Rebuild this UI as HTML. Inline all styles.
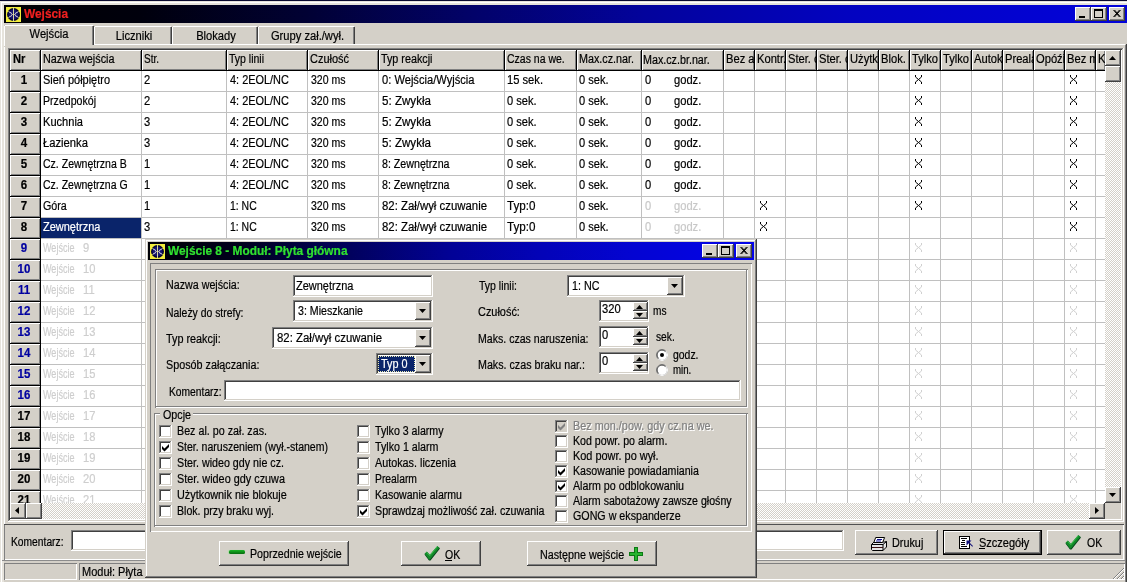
<!DOCTYPE html>
<html><head><meta charset="utf-8"><title>Wejścia</title><style>
html,body{margin:0;padding:0;background:#d4d0c8}
#r{will-change:transform;position:relative;width:1127px;height:582px;overflow:hidden;font-family:"Liberation Sans",sans-serif;font-size:11px;color:#000}
.a{position:absolute;display:block}
.t{white-space:pre;line-height:13px;font-size:12px;transform-origin:0 0;-webkit-text-stroke:0.2px currentColor}
</style></head><body><div id="r">
<div class="a" style="left:0px;top:0px;width:1127px;height:582px;background:#d4d0c8"></div>
<div class="a" style="left:0px;top:0px;width:1127px;height:1px;background:#0a0a30"></div>
<div class="a" style="left:0px;top:1px;width:1127px;height:4px;background:#e6e3dc"></div>
<div class="a" style="left:0px;top:1px;width:4px;height:581px;background:#e6e3dc"></div>
<div class="a" style="left:1px;top:2px;width:1126px;height:1px;background:#ffffff"></div>
<div class="a" style="left:1px;top:2px;width:1px;height:580px;background:#ffffff"></div>
<div class="a" style="left:1125px;top:45px;width:1px;height:537px;background:#808080"></div>
<div class="a" style="left:1126px;top:44px;width:1px;height:538px;background:#404040"></div>
<div class="a" style="left:4px;top:25px;width:1px;height:499px;background:#ffffff"></div>
<div class="a" style="left:4px;top:5px;width:1123px;height:18px;background:linear-gradient(to right,#000004 0%,#00000c 12%,#010134 27%,#02026a 42%,#03039c 57%,#0303c0 75%,#0303da 100%)"></div>
<div class="a" style="left:6px;top:7px;width:15px;height:15px"><svg width="15" height="15" viewBox="0 0 15 15"><rect width="15" height="15" fill="#f2ee3c"/><circle cx="7.500" cy="7.500" r="6.500" fill="#050530"/><circle cx="7.500" cy="7.500" r="5" fill="#15156e"/><path d="M6 6.600L2.600 4.600M9 6.600L12.400 4.600M6 8.400L2.600 10.400M9 8.400L12.400 10.400" stroke="#f4f4f4" stroke-width="0.900"/><path d="M7.500 0.500V14.500" stroke="#eeeea0" stroke-width="0.900"/><path d="M5.500 7.500H9.500" stroke="#d8d8b0" stroke-width="0.800"/><path d="M0.600 3.800L2.200 4.700M14.400 3.800L12.800 4.700M0.600 11.200L2.200 10.300M14.400 11.200L12.800 10.300" stroke="#f2ee3c" stroke-width="1.200"/></svg></div>
<div class="a t" style="left:24px;top:6px;transform:scaleX(0.9891);color:#f02020;font-weight:bold;line-height:16px">Wejścia</div>
<div class="a" style="left:1075px;top:7px;width:16px;height:14px;background:#d4d0c8;box-shadow:inset -1px -1px 0 #404040,inset 1px 1px 0 #ffffff,inset -2px -2px 0 #808080"></div>
<div class="a" style="left:1079px;top:16px;width:6px;height:2px;background:#000"></div>
<div class="a" style="left:1091px;top:7px;width:16px;height:14px;background:#d4d0c8;box-shadow:inset -1px -1px 0 #404040,inset 1px 1px 0 #ffffff,inset -2px -2px 0 #808080"></div>
<div class="a" style="left:1094px;top:9px;width:9px;height:9px;border:1px solid #000;border-top:2px solid #000;box-sizing:border-box"></div>
<div class="a" style="left:1109px;top:7px;width:16px;height:14px;background:#d4d0c8;box-shadow:inset -1px -1px 0 #404040,inset 1px 1px 0 #ffffff,inset -2px -2px 0 #808080"></div>
<svg class="a" style="left:1113px;top:10px" width="8" height="7" viewBox="0 0 8 7"><path d="M0.5 0L6.5 7M1.5 0L7.5 7M6.5 0L0.5 7M7.5 0L1.5 7" stroke="#000" stroke-width="1" fill="none"/></svg>
<div class="a" style="left:4px;top:44px;width:1121px;height:1px;background:#ffffff"></div>
<div class="a" style="left:95px;top:26px;width:76px;height:1px;background:#ffffff"></div>
<div class="a" style="left:94px;top:27px;width:1px;height:17px;background:#ffffff"></div>
<div class="a" style="left:171px;top:27px;width:1px;height:17px;background:#404040"></div>
<div class="a" style="left:170px;top:27px;width:1px;height:17px;background:#808080"></div>
<div class="a t" style="left:95px;top:30px;transform:scaleX(0.93);transform-origin:50% 0;width:78px;text-align:center">Liczniki</div>
<div class="a" style="left:173px;top:26px;width:84px;height:1px;background:#ffffff"></div>
<div class="a" style="left:172px;top:27px;width:1px;height:17px;background:#ffffff"></div>
<div class="a" style="left:257px;top:27px;width:1px;height:17px;background:#404040"></div>
<div class="a" style="left:256px;top:27px;width:1px;height:17px;background:#808080"></div>
<div class="a t" style="left:173px;top:30px;transform:scaleX(0.93);transform-origin:50% 0;width:86px;text-align:center">Blokady</div>
<div class="a" style="left:259px;top:26px;width:95px;height:1px;background:#ffffff"></div>
<div class="a" style="left:258px;top:27px;width:1px;height:17px;background:#ffffff"></div>
<div class="a" style="left:354px;top:27px;width:1px;height:17px;background:#404040"></div>
<div class="a" style="left:353px;top:27px;width:1px;height:17px;background:#808080"></div>
<div class="a t" style="left:259px;top:30px;transform:scaleX(0.93);transform-origin:50% 0;width:97px;text-align:center">Grupy zał./wył.</div>
<div class="a" style="left:4px;top:25px;width:90px;height:22px;background:#d4d0c8"></div>
<div class="a" style="left:5px;top:25px;width:88px;height:1px;background:#ffffff"></div>
<div class="a" style="left:4px;top:26px;width:1px;height:20px;background:#ffffff"></div>
<div class="a" style="left:93px;top:26px;width:1px;height:19px;background:#404040"></div>
<div class="a" style="left:92px;top:26px;width:1px;height:19px;background:#808080"></div>
<div class="a t" style="left:4px;top:28px;transform:scaleX(0.93);transform-origin:50% 0;width:90px;text-align:center">Wejścia</div>
<div class="a" style="left:8px;top:48px;width:1116px;height:474px;background:#ffffff;box-shadow:inset -1px -1px 0 #ffffff,inset 1px 1px 0 #808080,inset -2px -2px 0 #d4d0c8,inset 2px 2px 0 #404040"></div>
<div class="a" style="left:10px;top:50px;width:30px;height:20px;background:#d4d0c8;box-shadow:inset 1px 1px 0 #ffffff,inset -1px -1px 0 #808080;overflow:hidden"><span class="a t" style="left:2px;top:3px;transform:scaleX(0.93);font-weight:bold;left:3px">Nr</span></div>
<div class="a" style="left:41px;top:50px;width:100px;height:20px;background:#d4d0c8;box-shadow:inset 1px 1px 0 #ffffff,inset -1px -1px 0 #808080;overflow:hidden"><span class="a t" style="left:2px;top:3px;transform:scaleX(0.9010);">Nazwa wejścia</span></div>
<div class="a" style="left:142px;top:50px;width:84px;height:20px;background:#d4d0c8;box-shadow:inset 1px 1px 0 #ffffff,inset -1px -1px 0 #808080;overflow:hidden"><span class="a t" style="left:2px;top:3px;transform:scaleX(0.8326);">Str.</span></div>
<div class="a" style="left:227px;top:50px;width:80px;height:20px;background:#d4d0c8;box-shadow:inset 1px 1px 0 #ffffff,inset -1px -1px 0 #808080;overflow:hidden"><span class="a t" style="left:2px;top:3px;transform:scaleX(0.8747);">Typ linii</span></div>
<div class="a" style="left:308px;top:50px;width:70px;height:20px;background:#d4d0c8;box-shadow:inset 1px 1px 0 #ffffff,inset -1px -1px 0 #808080;overflow:hidden"><span class="a t" style="left:2px;top:3px;transform:scaleX(0.9136);">Czułość</span></div>
<div class="a" style="left:379px;top:50px;width:125px;height:20px;background:#d4d0c8;box-shadow:inset 1px 1px 0 #ffffff,inset -1px -1px 0 #808080;overflow:hidden"><span class="a t" style="left:2px;top:3px;transform:scaleX(0.8978);">Typ reakcji</span></div>
<div class="a" style="left:505px;top:50px;width:71px;height:20px;background:#d4d0c8;box-shadow:inset 1px 1px 0 #ffffff,inset -1px -1px 0 #808080;overflow:hidden"><span class="a t" style="left:2px;top:3px;transform:scaleX(0.8738);">Czas na we.</span></div>
<div class="a" style="left:577px;top:50px;width:64px;height:20px;background:#d4d0c8;box-shadow:inset 1px 1px 0 #ffffff,inset -1px -1px 0 #808080;overflow:hidden"><span class="a t" style="left:2px;top:3px;transform:scaleX(0.8964);">Max.cz.nar.</span></div>
<div class="a" style="left:642px;top:50px;width:81px;height:20px;background:#d4d0c8;box-shadow:inset 1px 1px 0 #ffffff,inset -1px -1px 0 #808080;overflow:hidden"><span class="a t" style="left:2px;top:3px;transform:scaleX(0.8942);left:1px;top:4px">Max.cz.br.nar.</span></div>
<div class="a" style="left:724px;top:50px;width:30px;height:20px;background:#d4d0c8;box-shadow:inset 1px 1px 0 #ffffff,inset -1px -1px 0 #808080;overflow:hidden"><span class="a t" style="left:2px;top:3px;transform:scaleX(0.93);">Bez a</span></div>
<div class="a" style="left:755px;top:50px;width:30px;height:20px;background:#d4d0c8;box-shadow:inset 1px 1px 0 #ffffff,inset -1px -1px 0 #808080;overflow:hidden"><span class="a t" style="left:2px;top:3px;transform:scaleX(0.93);">Kontr.</span></div>
<div class="a" style="left:786px;top:50px;width:30px;height:20px;background:#d4d0c8;box-shadow:inset 1px 1px 0 #ffffff,inset -1px -1px 0 #808080;overflow:hidden"><span class="a t" style="left:2px;top:3px;transform:scaleX(0.93);">Ster. o</span></div>
<div class="a" style="left:817px;top:50px;width:30px;height:20px;background:#d4d0c8;box-shadow:inset 1px 1px 0 #ffffff,inset -1px -1px 0 #808080;overflow:hidden"><span class="a t" style="left:2px;top:3px;transform:scaleX(0.93);">Ster. o</span></div>
<div class="a" style="left:848px;top:50px;width:30px;height:20px;background:#d4d0c8;box-shadow:inset 1px 1px 0 #ffffff,inset -1px -1px 0 #808080;overflow:hidden"><span class="a t" style="left:2px;top:3px;transform:scaleX(0.93);">Użytk</span></div>
<div class="a" style="left:879px;top:50px;width:30px;height:20px;background:#d4d0c8;box-shadow:inset 1px 1px 0 #ffffff,inset -1px -1px 0 #808080;overflow:hidden"><span class="a t" style="left:2px;top:3px;transform:scaleX(0.93);">Blok.</span></div>
<div class="a" style="left:910px;top:50px;width:30px;height:20px;background:#d4d0c8;box-shadow:inset 1px 1px 0 #ffffff,inset -1px -1px 0 #808080;overflow:hidden"><span class="a t" style="left:2px;top:3px;transform:scaleX(0.93);">Tylko</span></div>
<div class="a" style="left:941px;top:50px;width:30px;height:20px;background:#d4d0c8;box-shadow:inset 1px 1px 0 #ffffff,inset -1px -1px 0 #808080;overflow:hidden"><span class="a t" style="left:2px;top:3px;transform:scaleX(0.93);">Tylko</span></div>
<div class="a" style="left:972px;top:50px;width:30px;height:20px;background:#d4d0c8;box-shadow:inset 1px 1px 0 #ffffff,inset -1px -1px 0 #808080;overflow:hidden"><span class="a t" style="left:2px;top:3px;transform:scaleX(0.93);">Autok</span></div>
<div class="a" style="left:1003px;top:50px;width:30px;height:20px;background:#d4d0c8;box-shadow:inset 1px 1px 0 #ffffff,inset -1px -1px 0 #808080;overflow:hidden"><span class="a t" style="left:2px;top:3px;transform:scaleX(0.93);">Preala</span></div>
<div class="a" style="left:1034px;top:50px;width:30px;height:20px;background:#d4d0c8;box-shadow:inset 1px 1px 0 #ffffff,inset -1px -1px 0 #808080;overflow:hidden"><span class="a t" style="left:2px;top:3px;transform:scaleX(0.93);">Opóźi</span></div>
<div class="a" style="left:1065px;top:50px;width:30px;height:20px;background:#d4d0c8;box-shadow:inset 1px 1px 0 #ffffff,inset -1px -1px 0 #808080;overflow:hidden"><span class="a t" style="left:2px;top:3px;transform:scaleX(0.93);">Bez m</span></div>
<div class="a" style="left:1096px;top:50px;width:9px;height:20px;background:#d4d0c8;box-shadow:inset 1px 1px 0 #ffffff,inset -1px -1px 0 #808080;overflow:hidden"><span class="a t" style="left:2px;top:3px;transform:scaleX(0.93);">K</span></div>
<div class="a" style="left:40px;top:50px;width:1px;height:21px;background:#000"></div>
<div class="a" style="left:141px;top:50px;width:1px;height:21px;background:#000"></div>
<div class="a" style="left:226px;top:50px;width:1px;height:21px;background:#000"></div>
<div class="a" style="left:307px;top:50px;width:1px;height:21px;background:#000"></div>
<div class="a" style="left:378px;top:50px;width:1px;height:21px;background:#000"></div>
<div class="a" style="left:504px;top:50px;width:1px;height:21px;background:#000"></div>
<div class="a" style="left:576px;top:50px;width:1px;height:21px;background:#000"></div>
<div class="a" style="left:641px;top:50px;width:1px;height:21px;background:#000"></div>
<div class="a" style="left:723px;top:50px;width:1px;height:21px;background:#000"></div>
<div class="a" style="left:754px;top:50px;width:1px;height:21px;background:#000"></div>
<div class="a" style="left:785px;top:50px;width:1px;height:21px;background:#000"></div>
<div class="a" style="left:816px;top:50px;width:1px;height:21px;background:#000"></div>
<div class="a" style="left:847px;top:50px;width:1px;height:21px;background:#000"></div>
<div class="a" style="left:878px;top:50px;width:1px;height:21px;background:#000"></div>
<div class="a" style="left:909px;top:50px;width:1px;height:21px;background:#000"></div>
<div class="a" style="left:940px;top:50px;width:1px;height:21px;background:#000"></div>
<div class="a" style="left:971px;top:50px;width:1px;height:21px;background:#000"></div>
<div class="a" style="left:1002px;top:50px;width:1px;height:21px;background:#000"></div>
<div class="a" style="left:1033px;top:50px;width:1px;height:21px;background:#000"></div>
<div class="a" style="left:1064px;top:50px;width:1px;height:21px;background:#000"></div>
<div class="a" style="left:1095px;top:50px;width:1px;height:21px;background:#000"></div>
<div class="a" style="left:10px;top:70px;width:1095px;height:1px;background:#000"></div>
<div class="a" style="left:10px;top:71px;width:1095px;height:432px;overflow:hidden">
<div class="a" style="left:0px;top:0px;width:30px;height:20px;background:#d4d0c8;box-shadow:inset 1px 1px 0 #ffffff,inset -1px -1px 0 #808080"><span class="a t" style="width:28px;text-align:center;top:3px;font-weight:bold;font-size:12px;transform:scaleX(0.96);transform-origin:50% 0;color:#000">1</span></div>
<div class="a" style="left:0px;top:20px;width:31px;height:1px;background:#000"></div>
<div class="a" style="left:31px;top:20px;width:1064px;height:1px;background:#c0c0c0"></div>
<div class="a t" style="left:33px;top:3px;transform:scaleX(0.9129);">Sień półpiętro</div>
<div class="a t" style="left:134px;top:3px;transform:scaleX(0.93);">2</div>
<div class="a t" style="left:220px;top:3px;transform:scaleX(0.9103);">4: 2EOL/NC</div>
<div class="a t" style="left:301px;top:3px;transform:scaleX(0.8765);">320 ms</div>
<div class="a t" style="left:372px;top:3px;transform:scaleX(0.9278);">0: Wejścia/Wyjścia</div>
<div class="a t" style="left:497px;top:3px;transform:scaleX(0.9302);">15 sek.</div>
<div class="a t" style="left:569px;top:3px;transform:scaleX(0.9214);">0 sek.</div>
<div class="a t" style="left:635px;top:3px;transform:scaleX(0.93);color:#000">0</div>
<div class="a t" style="left:664px;top:3px;transform:scaleX(0.93);color:#000">godz.</div>
<svg class="a" style="left:905px;top:4px" width="7" height="9" viewBox="0 0 7 9"><path d="M0.5 0V2L3.5 4.5L6.5 2V0M0.5 9V7L3.5 4.5L6.5 7V9" stroke="#000" stroke-width="1" fill="none"/></svg>
<svg class="a" style="left:1060px;top:4px" width="7" height="9" viewBox="0 0 7 9"><path d="M0.5 0V2L3.5 4.5L6.5 2V0M0.5 9V7L3.5 4.5L6.5 7V9" stroke="#000" stroke-width="1" fill="none"/></svg>
<div class="a" style="left:0px;top:21px;width:30px;height:20px;background:#d4d0c8;box-shadow:inset 1px 1px 0 #ffffff,inset -1px -1px 0 #808080"><span class="a t" style="width:28px;text-align:center;top:3px;font-weight:bold;font-size:12px;transform:scaleX(0.96);transform-origin:50% 0;color:#000">2</span></div>
<div class="a" style="left:0px;top:41px;width:31px;height:1px;background:#000"></div>
<div class="a" style="left:31px;top:41px;width:1064px;height:1px;background:#c0c0c0"></div>
<div class="a t" style="left:33px;top:24px;transform:scaleX(0.8826);">Przedpokój</div>
<div class="a t" style="left:134px;top:24px;transform:scaleX(0.93);">2</div>
<div class="a t" style="left:220px;top:24px;transform:scaleX(0.9103);">4: 2EOL/NC</div>
<div class="a t" style="left:301px;top:24px;transform:scaleX(0.8765);">320 ms</div>
<div class="a t" style="left:372px;top:24px;transform:scaleX(0.9667);">5: Zwykła</div>
<div class="a t" style="left:497px;top:24px;transform:scaleX(0.9214);">0 sek.</div>
<div class="a t" style="left:569px;top:24px;transform:scaleX(0.9214);">0 sek.</div>
<div class="a t" style="left:635px;top:24px;transform:scaleX(0.93);color:#000">0</div>
<div class="a t" style="left:664px;top:24px;transform:scaleX(0.93);color:#000">godz.</div>
<svg class="a" style="left:905px;top:25px" width="7" height="9" viewBox="0 0 7 9"><path d="M0.5 0V2L3.5 4.5L6.5 2V0M0.5 9V7L3.5 4.5L6.5 7V9" stroke="#000" stroke-width="1" fill="none"/></svg>
<svg class="a" style="left:1060px;top:25px" width="7" height="9" viewBox="0 0 7 9"><path d="M0.5 0V2L3.5 4.5L6.5 2V0M0.5 9V7L3.5 4.5L6.5 7V9" stroke="#000" stroke-width="1" fill="none"/></svg>
<div class="a" style="left:0px;top:42px;width:30px;height:20px;background:#d4d0c8;box-shadow:inset 1px 1px 0 #ffffff,inset -1px -1px 0 #808080"><span class="a t" style="width:28px;text-align:center;top:3px;font-weight:bold;font-size:12px;transform:scaleX(0.96);transform-origin:50% 0;color:#000">3</span></div>
<div class="a" style="left:0px;top:62px;width:31px;height:1px;background:#000"></div>
<div class="a" style="left:31px;top:62px;width:1064px;height:1px;background:#c0c0c0"></div>
<div class="a t" style="left:33px;top:45px;transform:scaleX(0.9222);">Kuchnia</div>
<div class="a t" style="left:134px;top:45px;transform:scaleX(0.93);">3</div>
<div class="a t" style="left:220px;top:45px;transform:scaleX(0.9103);">4: 2EOL/NC</div>
<div class="a t" style="left:301px;top:45px;transform:scaleX(0.8765);">320 ms</div>
<div class="a t" style="left:372px;top:45px;transform:scaleX(0.9667);">5: Zwykła</div>
<div class="a t" style="left:497px;top:45px;transform:scaleX(0.9214);">0 sek.</div>
<div class="a t" style="left:569px;top:45px;transform:scaleX(0.9214);">0 sek.</div>
<div class="a t" style="left:635px;top:45px;transform:scaleX(0.93);color:#000">0</div>
<div class="a t" style="left:664px;top:45px;transform:scaleX(0.93);color:#000">godz.</div>
<svg class="a" style="left:905px;top:46px" width="7" height="9" viewBox="0 0 7 9"><path d="M0.5 0V2L3.5 4.5L6.5 2V0M0.5 9V7L3.5 4.5L6.5 7V9" stroke="#000" stroke-width="1" fill="none"/></svg>
<svg class="a" style="left:1060px;top:46px" width="7" height="9" viewBox="0 0 7 9"><path d="M0.5 0V2L3.5 4.5L6.5 2V0M0.5 9V7L3.5 4.5L6.5 7V9" stroke="#000" stroke-width="1" fill="none"/></svg>
<div class="a" style="left:0px;top:63px;width:30px;height:20px;background:#d4d0c8;box-shadow:inset 1px 1px 0 #ffffff,inset -1px -1px 0 #808080"><span class="a t" style="width:28px;text-align:center;top:3px;font-weight:bold;font-size:12px;transform:scaleX(0.96);transform-origin:50% 0;color:#000">4</span></div>
<div class="a" style="left:0px;top:83px;width:31px;height:1px;background:#000"></div>
<div class="a" style="left:31px;top:83px;width:1064px;height:1px;background:#c0c0c0"></div>
<div class="a t" style="left:33px;top:66px;transform:scaleX(0.9366);">Łazienka</div>
<div class="a t" style="left:134px;top:66px;transform:scaleX(0.93);">3</div>
<div class="a t" style="left:220px;top:66px;transform:scaleX(0.9103);">4: 2EOL/NC</div>
<div class="a t" style="left:301px;top:66px;transform:scaleX(0.8765);">320 ms</div>
<div class="a t" style="left:372px;top:66px;transform:scaleX(0.9667);">5: Zwykła</div>
<div class="a t" style="left:497px;top:66px;transform:scaleX(0.9214);">0 sek.</div>
<div class="a t" style="left:569px;top:66px;transform:scaleX(0.9214);">0 sek.</div>
<div class="a t" style="left:635px;top:66px;transform:scaleX(0.93);color:#000">0</div>
<div class="a t" style="left:664px;top:66px;transform:scaleX(0.93);color:#000">godz.</div>
<svg class="a" style="left:905px;top:67px" width="7" height="9" viewBox="0 0 7 9"><path d="M0.5 0V2L3.5 4.5L6.5 2V0M0.5 9V7L3.5 4.5L6.5 7V9" stroke="#000" stroke-width="1" fill="none"/></svg>
<svg class="a" style="left:1060px;top:67px" width="7" height="9" viewBox="0 0 7 9"><path d="M0.5 0V2L3.5 4.5L6.5 2V0M0.5 9V7L3.5 4.5L6.5 7V9" stroke="#000" stroke-width="1" fill="none"/></svg>
<div class="a" style="left:0px;top:84px;width:30px;height:20px;background:#d4d0c8;box-shadow:inset 1px 1px 0 #ffffff,inset -1px -1px 0 #808080"><span class="a t" style="width:28px;text-align:center;top:3px;font-weight:bold;font-size:12px;transform:scaleX(0.96);transform-origin:50% 0;color:#000">5</span></div>
<div class="a" style="left:0px;top:104px;width:31px;height:1px;background:#000"></div>
<div class="a" style="left:31px;top:104px;width:1064px;height:1px;background:#c0c0c0"></div>
<div class="a t" style="left:33px;top:87px;transform:scaleX(0.8776);">Cz. Zewnętrzna B</div>
<div class="a t" style="left:134px;top:87px;transform:scaleX(0.93);">1</div>
<div class="a t" style="left:220px;top:87px;transform:scaleX(0.9103);">4: 2EOL/NC</div>
<div class="a t" style="left:301px;top:87px;transform:scaleX(0.8765);">320 ms</div>
<div class="a t" style="left:372px;top:87px;transform:scaleX(0.8876);">8: Zewnętrzna</div>
<div class="a t" style="left:497px;top:87px;transform:scaleX(0.9214);">0 sek.</div>
<div class="a t" style="left:569px;top:87px;transform:scaleX(0.9214);">0 sek.</div>
<div class="a t" style="left:635px;top:87px;transform:scaleX(0.93);color:#000">0</div>
<div class="a t" style="left:664px;top:87px;transform:scaleX(0.93);color:#000">godz.</div>
<svg class="a" style="left:905px;top:88px" width="7" height="9" viewBox="0 0 7 9"><path d="M0.5 0V2L3.5 4.5L6.5 2V0M0.5 9V7L3.5 4.5L6.5 7V9" stroke="#000" stroke-width="1" fill="none"/></svg>
<svg class="a" style="left:1060px;top:88px" width="7" height="9" viewBox="0 0 7 9"><path d="M0.5 0V2L3.5 4.5L6.5 2V0M0.5 9V7L3.5 4.5L6.5 7V9" stroke="#000" stroke-width="1" fill="none"/></svg>
<div class="a" style="left:0px;top:105px;width:30px;height:20px;background:#d4d0c8;box-shadow:inset 1px 1px 0 #ffffff,inset -1px -1px 0 #808080"><span class="a t" style="width:28px;text-align:center;top:3px;font-weight:bold;font-size:12px;transform:scaleX(0.96);transform-origin:50% 0;color:#000">6</span></div>
<div class="a" style="left:0px;top:125px;width:31px;height:1px;background:#000"></div>
<div class="a" style="left:31px;top:125px;width:1064px;height:1px;background:#c0c0c0"></div>
<div class="a t" style="left:33px;top:108px;transform:scaleX(0.8748);">Cz. Zewnętrzna G</div>
<div class="a t" style="left:134px;top:108px;transform:scaleX(0.93);">1</div>
<div class="a t" style="left:220px;top:108px;transform:scaleX(0.9103);">4: 2EOL/NC</div>
<div class="a t" style="left:301px;top:108px;transform:scaleX(0.8765);">320 ms</div>
<div class="a t" style="left:372px;top:108px;transform:scaleX(0.8876);">8: Zewnętrzna</div>
<div class="a t" style="left:497px;top:108px;transform:scaleX(0.9214);">0 sek.</div>
<div class="a t" style="left:569px;top:108px;transform:scaleX(0.9214);">0 sek.</div>
<div class="a t" style="left:635px;top:108px;transform:scaleX(0.93);color:#000">0</div>
<div class="a t" style="left:664px;top:108px;transform:scaleX(0.93);color:#000">godz.</div>
<svg class="a" style="left:905px;top:109px" width="7" height="9" viewBox="0 0 7 9"><path d="M0.5 0V2L3.5 4.5L6.5 2V0M0.5 9V7L3.5 4.5L6.5 7V9" stroke="#000" stroke-width="1" fill="none"/></svg>
<svg class="a" style="left:1060px;top:109px" width="7" height="9" viewBox="0 0 7 9"><path d="M0.5 0V2L3.5 4.5L6.5 2V0M0.5 9V7L3.5 4.5L6.5 7V9" stroke="#000" stroke-width="1" fill="none"/></svg>
<div class="a" style="left:0px;top:126px;width:30px;height:20px;background:#d4d0c8;box-shadow:inset 1px 1px 0 #ffffff,inset -1px -1px 0 #808080"><span class="a t" style="width:28px;text-align:center;top:3px;font-weight:bold;font-size:12px;transform:scaleX(0.96);transform-origin:50% 0;color:#000">7</span></div>
<div class="a" style="left:0px;top:146px;width:31px;height:1px;background:#000"></div>
<div class="a" style="left:31px;top:146px;width:1064px;height:1px;background:#c0c0c0"></div>
<div class="a t" style="left:33px;top:129px;transform:scaleX(0.8918);">Góra</div>
<div class="a t" style="left:134px;top:129px;transform:scaleX(0.93);">1</div>
<div class="a t" style="left:220px;top:129px;transform:scaleX(0.8701);">1: NC</div>
<div class="a t" style="left:301px;top:129px;transform:scaleX(0.8765);">320 ms</div>
<div class="a t" style="left:372px;top:129px;transform:scaleX(0.9483);">82: Zał/wył czuwanie</div>
<div class="a t" style="left:497px;top:129px;transform:scaleX(0.9707);">Typ:0</div>
<div class="a t" style="left:569px;top:129px;transform:scaleX(0.9214);">0 sek.</div>
<div class="a t" style="left:635px;top:129px;transform:scaleX(0.93);color:#c8c8c8">0</div>
<div class="a t" style="left:664px;top:129px;transform:scaleX(0.93);color:#c8c8c8">godz.</div>
<svg class="a" style="left:750px;top:130px" width="7" height="9" viewBox="0 0 7 9"><path d="M0.5 0V2L3.5 4.5L6.5 2V0M0.5 9V7L3.5 4.5L6.5 7V9" stroke="#000" stroke-width="1" fill="none"/></svg>
<svg class="a" style="left:905px;top:130px" width="7" height="9" viewBox="0 0 7 9"><path d="M0.5 0V2L3.5 4.5L6.5 2V0M0.5 9V7L3.5 4.5L6.5 7V9" stroke="#000" stroke-width="1" fill="none"/></svg>
<svg class="a" style="left:1060px;top:130px" width="7" height="9" viewBox="0 0 7 9"><path d="M0.5 0V2L3.5 4.5L6.5 2V0M0.5 9V7L3.5 4.5L6.5 7V9" stroke="#000" stroke-width="1" fill="none"/></svg>
<div class="a" style="left:0px;top:147px;width:30px;height:20px;background:#d4d0c8;box-shadow:inset 1px 1px 0 #ffffff,inset -1px -1px 0 #808080"><span class="a t" style="width:28px;text-align:center;top:3px;font-weight:bold;font-size:12px;transform:scaleX(0.96);transform-origin:50% 0;color:#000">8</span></div>
<div class="a" style="left:0px;top:167px;width:31px;height:1px;background:#000"></div>
<div class="a" style="left:31px;top:167px;width:1064px;height:1px;background:#c0c0c0"></div>
<div class="a" style="left:31px;top:147px;width:100px;height:20px;background:#0a246a"></div>
<div class="a t" style="left:33px;top:150px;transform:scaleX(0.9154);color:#fff">Zewnętrzna</div>
<div class="a t" style="left:134px;top:150px;transform:scaleX(0.93);">3</div>
<div class="a t" style="left:220px;top:150px;transform:scaleX(0.8701);">1: NC</div>
<div class="a t" style="left:301px;top:150px;transform:scaleX(0.8765);">320 ms</div>
<div class="a t" style="left:372px;top:150px;transform:scaleX(0.9483);">82: Zał/wył czuwanie</div>
<div class="a t" style="left:497px;top:150px;transform:scaleX(0.9707);">Typ:0</div>
<div class="a t" style="left:569px;top:150px;transform:scaleX(0.9214);">0 sek.</div>
<div class="a t" style="left:635px;top:150px;transform:scaleX(0.93);color:#c8c8c8">0</div>
<div class="a t" style="left:664px;top:150px;transform:scaleX(0.93);color:#c8c8c8">godz.</div>
<svg class="a" style="left:750px;top:151px" width="7" height="9" viewBox="0 0 7 9"><path d="M0.5 0V2L3.5 4.5L6.5 2V0M0.5 9V7L3.5 4.5L6.5 7V9" stroke="#000" stroke-width="1" fill="none"/></svg>
<svg class="a" style="left:1060px;top:151px" width="7" height="9" viewBox="0 0 7 9"><path d="M0.5 0V2L3.5 4.5L6.5 2V0M0.5 9V7L3.5 4.5L6.5 7V9" stroke="#000" stroke-width="1" fill="none"/></svg>
<div class="a" style="left:0px;top:168px;width:30px;height:20px;background:#d4d0c8;box-shadow:inset 1px 1px 0 #ffffff,inset -1px -1px 0 #808080"><span class="a t" style="width:28px;text-align:center;top:3px;font-weight:bold;font-size:12px;transform:scaleX(0.96);transform-origin:50% 0;color:#0000a0">9</span></div>
<div class="a" style="left:0px;top:188px;width:31px;height:1px;background:#000"></div>
<div class="a" style="left:31px;top:188px;width:1064px;height:1px;background:#c0c0c0"></div>
<div class="a t" style="left:33px;top:171px;transform:scaleX(0.7536);color:#cecece">Wejście</div>
<div class="a t" style="left:73px;top:171px;transform:scaleX(0.93);color:#cecece">9</div>
<svg class="a" style="left:905px;top:172px" width="7" height="9" viewBox="0 0 7 9"><path d="M0.5 0V2L3.5 4.5L6.5 2V0M0.5 9V7L3.5 4.5L6.5 7V9" stroke="#d0d0d0" stroke-width="1" fill="none"/></svg>
<svg class="a" style="left:1060px;top:172px" width="7" height="9" viewBox="0 0 7 9"><path d="M0.5 0V2L3.5 4.5L6.5 2V0M0.5 9V7L3.5 4.5L6.5 7V9" stroke="#d0d0d0" stroke-width="1" fill="none"/></svg>
<div class="a" style="left:0px;top:189px;width:30px;height:20px;background:#d4d0c8;box-shadow:inset 1px 1px 0 #ffffff,inset -1px -1px 0 #808080"><span class="a t" style="width:28px;text-align:center;top:3px;font-weight:bold;font-size:12px;transform:scaleX(0.96);transform-origin:50% 0;color:#0000a0">10</span></div>
<div class="a" style="left:0px;top:209px;width:31px;height:1px;background:#000"></div>
<div class="a" style="left:31px;top:209px;width:1064px;height:1px;background:#c0c0c0"></div>
<div class="a t" style="left:33px;top:192px;transform:scaleX(0.7536);color:#cecece">Wejście</div>
<div class="a t" style="left:73px;top:192px;transform:scaleX(0.93);color:#cecece">10</div>
<svg class="a" style="left:905px;top:193px" width="7" height="9" viewBox="0 0 7 9"><path d="M0.5 0V2L3.5 4.5L6.5 2V0M0.5 9V7L3.5 4.5L6.5 7V9" stroke="#d0d0d0" stroke-width="1" fill="none"/></svg>
<svg class="a" style="left:1060px;top:193px" width="7" height="9" viewBox="0 0 7 9"><path d="M0.5 0V2L3.5 4.5L6.5 2V0M0.5 9V7L3.5 4.5L6.5 7V9" stroke="#d0d0d0" stroke-width="1" fill="none"/></svg>
<div class="a" style="left:0px;top:210px;width:30px;height:20px;background:#d4d0c8;box-shadow:inset 1px 1px 0 #ffffff,inset -1px -1px 0 #808080"><span class="a t" style="width:28px;text-align:center;top:3px;font-weight:bold;font-size:12px;transform:scaleX(0.96);transform-origin:50% 0;color:#0000a0">11</span></div>
<div class="a" style="left:0px;top:230px;width:31px;height:1px;background:#000"></div>
<div class="a" style="left:31px;top:230px;width:1064px;height:1px;background:#c0c0c0"></div>
<div class="a t" style="left:33px;top:213px;transform:scaleX(0.7536);color:#cecece">Wejście</div>
<div class="a t" style="left:73px;top:213px;transform:scaleX(0.93);color:#cecece">11</div>
<svg class="a" style="left:905px;top:214px" width="7" height="9" viewBox="0 0 7 9"><path d="M0.5 0V2L3.5 4.5L6.5 2V0M0.5 9V7L3.5 4.5L6.5 7V9" stroke="#d0d0d0" stroke-width="1" fill="none"/></svg>
<svg class="a" style="left:1060px;top:214px" width="7" height="9" viewBox="0 0 7 9"><path d="M0.5 0V2L3.5 4.5L6.5 2V0M0.5 9V7L3.5 4.5L6.5 7V9" stroke="#d0d0d0" stroke-width="1" fill="none"/></svg>
<div class="a" style="left:0px;top:231px;width:30px;height:20px;background:#d4d0c8;box-shadow:inset 1px 1px 0 #ffffff,inset -1px -1px 0 #808080"><span class="a t" style="width:28px;text-align:center;top:3px;font-weight:bold;font-size:12px;transform:scaleX(0.96);transform-origin:50% 0;color:#0000a0">12</span></div>
<div class="a" style="left:0px;top:251px;width:31px;height:1px;background:#000"></div>
<div class="a" style="left:31px;top:251px;width:1064px;height:1px;background:#c0c0c0"></div>
<div class="a t" style="left:33px;top:234px;transform:scaleX(0.7536);color:#cecece">Wejście</div>
<div class="a t" style="left:73px;top:234px;transform:scaleX(0.93);color:#cecece">12</div>
<svg class="a" style="left:905px;top:235px" width="7" height="9" viewBox="0 0 7 9"><path d="M0.5 0V2L3.5 4.5L6.5 2V0M0.5 9V7L3.5 4.5L6.5 7V9" stroke="#d0d0d0" stroke-width="1" fill="none"/></svg>
<svg class="a" style="left:1060px;top:235px" width="7" height="9" viewBox="0 0 7 9"><path d="M0.5 0V2L3.5 4.5L6.5 2V0M0.5 9V7L3.5 4.5L6.5 7V9" stroke="#d0d0d0" stroke-width="1" fill="none"/></svg>
<div class="a" style="left:0px;top:252px;width:30px;height:20px;background:#d4d0c8;box-shadow:inset 1px 1px 0 #ffffff,inset -1px -1px 0 #808080"><span class="a t" style="width:28px;text-align:center;top:3px;font-weight:bold;font-size:12px;transform:scaleX(0.96);transform-origin:50% 0;color:#0000a0">13</span></div>
<div class="a" style="left:0px;top:272px;width:31px;height:1px;background:#000"></div>
<div class="a" style="left:31px;top:272px;width:1064px;height:1px;background:#c0c0c0"></div>
<div class="a t" style="left:33px;top:255px;transform:scaleX(0.7536);color:#cecece">Wejście</div>
<div class="a t" style="left:73px;top:255px;transform:scaleX(0.93);color:#cecece">13</div>
<svg class="a" style="left:905px;top:256px" width="7" height="9" viewBox="0 0 7 9"><path d="M0.5 0V2L3.5 4.5L6.5 2V0M0.5 9V7L3.5 4.5L6.5 7V9" stroke="#d0d0d0" stroke-width="1" fill="none"/></svg>
<svg class="a" style="left:1060px;top:256px" width="7" height="9" viewBox="0 0 7 9"><path d="M0.5 0V2L3.5 4.5L6.5 2V0M0.5 9V7L3.5 4.5L6.5 7V9" stroke="#d0d0d0" stroke-width="1" fill="none"/></svg>
<div class="a" style="left:0px;top:273px;width:30px;height:20px;background:#d4d0c8;box-shadow:inset 1px 1px 0 #ffffff,inset -1px -1px 0 #808080"><span class="a t" style="width:28px;text-align:center;top:3px;font-weight:bold;font-size:12px;transform:scaleX(0.96);transform-origin:50% 0;color:#0000a0">14</span></div>
<div class="a" style="left:0px;top:293px;width:31px;height:1px;background:#000"></div>
<div class="a" style="left:31px;top:293px;width:1064px;height:1px;background:#c0c0c0"></div>
<div class="a t" style="left:33px;top:276px;transform:scaleX(0.7536);color:#cecece">Wejście</div>
<div class="a t" style="left:73px;top:276px;transform:scaleX(0.93);color:#cecece">14</div>
<svg class="a" style="left:905px;top:277px" width="7" height="9" viewBox="0 0 7 9"><path d="M0.5 0V2L3.5 4.5L6.5 2V0M0.5 9V7L3.5 4.5L6.5 7V9" stroke="#d0d0d0" stroke-width="1" fill="none"/></svg>
<svg class="a" style="left:1060px;top:277px" width="7" height="9" viewBox="0 0 7 9"><path d="M0.5 0V2L3.5 4.5L6.5 2V0M0.5 9V7L3.5 4.5L6.5 7V9" stroke="#d0d0d0" stroke-width="1" fill="none"/></svg>
<div class="a" style="left:0px;top:294px;width:30px;height:20px;background:#d4d0c8;box-shadow:inset 1px 1px 0 #ffffff,inset -1px -1px 0 #808080"><span class="a t" style="width:28px;text-align:center;top:3px;font-weight:bold;font-size:12px;transform:scaleX(0.96);transform-origin:50% 0;color:#0000a0">15</span></div>
<div class="a" style="left:0px;top:314px;width:31px;height:1px;background:#000"></div>
<div class="a" style="left:31px;top:314px;width:1064px;height:1px;background:#c0c0c0"></div>
<div class="a t" style="left:33px;top:297px;transform:scaleX(0.7536);color:#cecece">Wejście</div>
<div class="a t" style="left:73px;top:297px;transform:scaleX(0.93);color:#cecece">15</div>
<svg class="a" style="left:905px;top:298px" width="7" height="9" viewBox="0 0 7 9"><path d="M0.5 0V2L3.5 4.5L6.5 2V0M0.5 9V7L3.5 4.5L6.5 7V9" stroke="#d0d0d0" stroke-width="1" fill="none"/></svg>
<svg class="a" style="left:1060px;top:298px" width="7" height="9" viewBox="0 0 7 9"><path d="M0.5 0V2L3.5 4.5L6.5 2V0M0.5 9V7L3.5 4.5L6.5 7V9" stroke="#d0d0d0" stroke-width="1" fill="none"/></svg>
<div class="a" style="left:0px;top:315px;width:30px;height:20px;background:#d4d0c8;box-shadow:inset 1px 1px 0 #ffffff,inset -1px -1px 0 #808080"><span class="a t" style="width:28px;text-align:center;top:3px;font-weight:bold;font-size:12px;transform:scaleX(0.96);transform-origin:50% 0;color:#0000a0">16</span></div>
<div class="a" style="left:0px;top:335px;width:31px;height:1px;background:#000"></div>
<div class="a" style="left:31px;top:335px;width:1064px;height:1px;background:#c0c0c0"></div>
<div class="a t" style="left:33px;top:318px;transform:scaleX(0.7536);color:#cecece">Wejście</div>
<div class="a t" style="left:73px;top:318px;transform:scaleX(0.93);color:#cecece">16</div>
<svg class="a" style="left:905px;top:319px" width="7" height="9" viewBox="0 0 7 9"><path d="M0.5 0V2L3.5 4.5L6.5 2V0M0.5 9V7L3.5 4.5L6.5 7V9" stroke="#d0d0d0" stroke-width="1" fill="none"/></svg>
<svg class="a" style="left:1060px;top:319px" width="7" height="9" viewBox="0 0 7 9"><path d="M0.5 0V2L3.5 4.5L6.5 2V0M0.5 9V7L3.5 4.5L6.5 7V9" stroke="#d0d0d0" stroke-width="1" fill="none"/></svg>
<div class="a" style="left:0px;top:336px;width:30px;height:20px;background:#d4d0c8;box-shadow:inset 1px 1px 0 #ffffff,inset -1px -1px 0 #808080"><span class="a t" style="width:28px;text-align:center;top:3px;font-weight:bold;font-size:12px;transform:scaleX(0.96);transform-origin:50% 0;color:#000">17</span></div>
<div class="a" style="left:0px;top:356px;width:31px;height:1px;background:#000"></div>
<div class="a" style="left:31px;top:356px;width:1064px;height:1px;background:#c0c0c0"></div>
<div class="a t" style="left:33px;top:339px;transform:scaleX(0.7536);color:#cecece">Wejście</div>
<div class="a t" style="left:73px;top:339px;transform:scaleX(0.93);color:#cecece">17</div>
<svg class="a" style="left:905px;top:340px" width="7" height="9" viewBox="0 0 7 9"><path d="M0.5 0V2L3.5 4.5L6.5 2V0M0.5 9V7L3.5 4.5L6.5 7V9" stroke="#d0d0d0" stroke-width="1" fill="none"/></svg>
<svg class="a" style="left:1060px;top:340px" width="7" height="9" viewBox="0 0 7 9"><path d="M0.5 0V2L3.5 4.5L6.5 2V0M0.5 9V7L3.5 4.5L6.5 7V9" stroke="#d0d0d0" stroke-width="1" fill="none"/></svg>
<div class="a" style="left:0px;top:357px;width:30px;height:20px;background:#d4d0c8;box-shadow:inset 1px 1px 0 #ffffff,inset -1px -1px 0 #808080"><span class="a t" style="width:28px;text-align:center;top:3px;font-weight:bold;font-size:12px;transform:scaleX(0.96);transform-origin:50% 0;color:#000">18</span></div>
<div class="a" style="left:0px;top:377px;width:31px;height:1px;background:#000"></div>
<div class="a" style="left:31px;top:377px;width:1064px;height:1px;background:#c0c0c0"></div>
<div class="a t" style="left:33px;top:360px;transform:scaleX(0.7536);color:#cecece">Wejście</div>
<div class="a t" style="left:73px;top:360px;transform:scaleX(0.93);color:#cecece">18</div>
<svg class="a" style="left:905px;top:361px" width="7" height="9" viewBox="0 0 7 9"><path d="M0.5 0V2L3.5 4.5L6.5 2V0M0.5 9V7L3.5 4.5L6.5 7V9" stroke="#d0d0d0" stroke-width="1" fill="none"/></svg>
<svg class="a" style="left:1060px;top:361px" width="7" height="9" viewBox="0 0 7 9"><path d="M0.5 0V2L3.5 4.5L6.5 2V0M0.5 9V7L3.5 4.5L6.5 7V9" stroke="#d0d0d0" stroke-width="1" fill="none"/></svg>
<div class="a" style="left:0px;top:378px;width:30px;height:20px;background:#d4d0c8;box-shadow:inset 1px 1px 0 #ffffff,inset -1px -1px 0 #808080"><span class="a t" style="width:28px;text-align:center;top:3px;font-weight:bold;font-size:12px;transform:scaleX(0.96);transform-origin:50% 0;color:#000">19</span></div>
<div class="a" style="left:0px;top:398px;width:31px;height:1px;background:#000"></div>
<div class="a" style="left:31px;top:398px;width:1064px;height:1px;background:#c0c0c0"></div>
<div class="a t" style="left:33px;top:381px;transform:scaleX(0.7536);color:#cecece">Wejście</div>
<div class="a t" style="left:73px;top:381px;transform:scaleX(0.93);color:#cecece">19</div>
<svg class="a" style="left:905px;top:382px" width="7" height="9" viewBox="0 0 7 9"><path d="M0.5 0V2L3.5 4.5L6.5 2V0M0.5 9V7L3.5 4.5L6.5 7V9" stroke="#d0d0d0" stroke-width="1" fill="none"/></svg>
<svg class="a" style="left:1060px;top:382px" width="7" height="9" viewBox="0 0 7 9"><path d="M0.5 0V2L3.5 4.5L6.5 2V0M0.5 9V7L3.5 4.5L6.5 7V9" stroke="#d0d0d0" stroke-width="1" fill="none"/></svg>
<div class="a" style="left:0px;top:399px;width:30px;height:20px;background:#d4d0c8;box-shadow:inset 1px 1px 0 #ffffff,inset -1px -1px 0 #808080"><span class="a t" style="width:28px;text-align:center;top:3px;font-weight:bold;font-size:12px;transform:scaleX(0.96);transform-origin:50% 0;color:#000">20</span></div>
<div class="a" style="left:0px;top:419px;width:31px;height:1px;background:#000"></div>
<div class="a" style="left:31px;top:419px;width:1064px;height:1px;background:#c0c0c0"></div>
<div class="a t" style="left:33px;top:402px;transform:scaleX(0.7536);color:#cecece">Wejście</div>
<div class="a t" style="left:73px;top:402px;transform:scaleX(0.93);color:#cecece">20</div>
<svg class="a" style="left:905px;top:403px" width="7" height="9" viewBox="0 0 7 9"><path d="M0.5 0V2L3.5 4.5L6.5 2V0M0.5 9V7L3.5 4.5L6.5 7V9" stroke="#d0d0d0" stroke-width="1" fill="none"/></svg>
<svg class="a" style="left:1060px;top:403px" width="7" height="9" viewBox="0 0 7 9"><path d="M0.5 0V2L3.5 4.5L6.5 2V0M0.5 9V7L3.5 4.5L6.5 7V9" stroke="#d0d0d0" stroke-width="1" fill="none"/></svg>
<div class="a" style="left:0px;top:420px;width:30px;height:20px;background:#d4d0c8;box-shadow:inset 1px 1px 0 #ffffff,inset -1px -1px 0 #808080"><span class="a t" style="width:28px;text-align:center;top:3px;font-weight:bold;font-size:12px;transform:scaleX(0.96);transform-origin:50% 0;color:#000">21</span></div>
<div class="a" style="left:0px;top:440px;width:31px;height:1px;background:#000"></div>
<div class="a" style="left:31px;top:440px;width:1064px;height:1px;background:#c0c0c0"></div>
<div class="a t" style="left:33px;top:423px;transform:scaleX(0.7536);color:#cecece">Wejście</div>
<div class="a t" style="left:73px;top:423px;transform:scaleX(0.93);color:#cecece">21</div>
<svg class="a" style="left:905px;top:424px" width="7" height="9" viewBox="0 0 7 9"><path d="M0.5 0V2L3.5 4.5L6.5 2V0M0.5 9V7L3.5 4.5L6.5 7V9" stroke="#d0d0d0" stroke-width="1" fill="none"/></svg>
<svg class="a" style="left:1060px;top:424px" width="7" height="9" viewBox="0 0 7 9"><path d="M0.5 0V2L3.5 4.5L6.5 2V0M0.5 9V7L3.5 4.5L6.5 7V9" stroke="#d0d0d0" stroke-width="1" fill="none"/></svg>
<div class="a" style="left:131px;top:0px;width:1px;height:432px;background:#c0c0c0"></div>
<div class="a" style="left:216px;top:0px;width:1px;height:432px;background:#c0c0c0"></div>
<div class="a" style="left:297px;top:0px;width:1px;height:432px;background:#c0c0c0"></div>
<div class="a" style="left:368px;top:0px;width:1px;height:432px;background:#c0c0c0"></div>
<div class="a" style="left:494px;top:0px;width:1px;height:432px;background:#c0c0c0"></div>
<div class="a" style="left:566px;top:0px;width:1px;height:432px;background:#c0c0c0"></div>
<div class="a" style="left:631px;top:0px;width:1px;height:432px;background:#c0c0c0"></div>
<div class="a" style="left:713px;top:0px;width:1px;height:432px;background:#c0c0c0"></div>
<div class="a" style="left:744px;top:0px;width:1px;height:432px;background:#c0c0c0"></div>
<div class="a" style="left:775px;top:0px;width:1px;height:432px;background:#c0c0c0"></div>
<div class="a" style="left:806px;top:0px;width:1px;height:432px;background:#c0c0c0"></div>
<div class="a" style="left:837px;top:0px;width:1px;height:432px;background:#c0c0c0"></div>
<div class="a" style="left:868px;top:0px;width:1px;height:432px;background:#c0c0c0"></div>
<div class="a" style="left:899px;top:0px;width:1px;height:432px;background:#c0c0c0"></div>
<div class="a" style="left:930px;top:0px;width:1px;height:432px;background:#c0c0c0"></div>
<div class="a" style="left:961px;top:0px;width:1px;height:432px;background:#c0c0c0"></div>
<div class="a" style="left:992px;top:0px;width:1px;height:432px;background:#c0c0c0"></div>
<div class="a" style="left:1023px;top:0px;width:1px;height:432px;background:#c0c0c0"></div>
<div class="a" style="left:1054px;top:0px;width:1px;height:432px;background:#c0c0c0"></div>
<div class="a" style="left:1085px;top:0px;width:1px;height:432px;background:#c0c0c0"></div>
<div class="a" style="left:30px;top:0px;width:1px;height:432px;background:#000"></div>
</div>
<div class="a" style="left:1105px;top:50px;width:16px;height:453px;background-image:conic-gradient(#fff 25%,#d4d0c8 0 50%,#fff 0 75%,#d4d0c8 0);background-size:2px 2px"></div>
<div class="a" style="left:1105px;top:50px;width:16px;height:16px;background:#d4d0c8;box-shadow:inset -1px -1px 0 #404040,inset 1px 1px 0 #ffffff,inset -2px -2px 0 #808080,inset 2px 2px 0 #d4d0c8"></div>
<svg class="a" style="left:1109px;top:56px" width="7" height="4" viewBox="0 0 7 4"><path d="M3.5 0L7 4H0Z" fill="#000"/></svg>
<div class="a" style="left:1105px;top:66px;width:16px;height:16px;background:#d4d0c8;box-shadow:inset -1px -1px 0 #404040,inset 1px 1px 0 #ffffff,inset -2px -2px 0 #808080,inset 2px 2px 0 #d4d0c8"></div>
<div class="a" style="left:1105px;top:487px;width:16px;height:16px;background:#d4d0c8;box-shadow:inset -1px -1px 0 #404040,inset 1px 1px 0 #ffffff,inset -2px -2px 0 #808080,inset 2px 2px 0 #d4d0c8"></div>
<svg class="a" style="left:1109px;top:493px" width="7" height="4" viewBox="0 0 7 4"><path d="M0 0H7L3.5 4Z" fill="#000"/></svg>
<div class="a" style="left:10px;top:503px;width:1095px;height:16px;background-image:conic-gradient(#fff 25%,#d4d0c8 0 50%,#fff 0 75%,#d4d0c8 0);background-size:2px 2px"></div>
<div class="a" style="left:10px;top:503px;width:16px;height:16px;background:#d4d0c8;box-shadow:inset -1px -1px 0 #404040,inset 1px 1px 0 #ffffff,inset -2px -2px 0 #808080,inset 2px 2px 0 #d4d0c8"></div>
<svg class="a" style="left:15px;top:507px" width="4" height="7" viewBox="0 0 4 7"><path d="M4 0V7L0 3.5Z" fill="#000"/></svg>
<div class="a" style="left:26px;top:503px;width:16px;height:16px;background:#d4d0c8;box-shadow:inset -1px -1px 0 #404040,inset 1px 1px 0 #ffffff,inset -2px -2px 0 #808080,inset 2px 2px 0 #d4d0c8"></div>
<div class="a" style="left:1089px;top:503px;width:16px;height:16px;background:#d4d0c8;box-shadow:inset -1px -1px 0 #404040,inset 1px 1px 0 #ffffff,inset -2px -2px 0 #808080,inset 2px 2px 0 #d4d0c8"></div>
<svg class="a" style="left:1095px;top:507px" width="4" height="7" viewBox="0 0 4 7"><path d="M0 0L4 3.5L0 7Z" fill="#000"/></svg>
<div class="a" style="left:1105px;top:503px;width:16px;height:16px;background:#d4d0c8"></div>
<div class="a" style="left:4px;top:524px;width:1120px;height:36px;box-shadow:inset 1px 1px 0 #808080,inset -1px -1px 0 #ffffff"></div>
<div class="a" style="left:4px;top:524px;width:1120px;height:1px;background:#505050"></div>
<div class="a t" style="left:11px;top:536px;transform:scaleX(0.8556);">Komentarz:</div>
<div class="a" style="left:71px;top:530px;width:773px;height:21px;background:#ffffff;box-shadow:inset -1px -1px 0 #ffffff,inset 1px 1px 0 #808080,inset -2px -2px 0 #d4d0c8,inset 2px 2px 0 #404040"></div>
<div class="a" style="left:855px;top:530px;width:83px;height:25px;background:#d4d0c8;box-shadow:inset -1px -1px 0 #404040,inset 1px 1px 0 #ffffff,inset -2px -2px 0 #808080,inset 2px 2px 0 #d4d0c8"></div>
<div class="a t" style="left:892px;top:537px;transform:scaleX(0.9023);">Drukuj</div>
<div class="a" style="left:943px;top:530px;width:99px;height:25px;background:#000"></div>
<div class="a" style="left:944px;top:531px;width:97px;height:23px;background:#d4d0c8;box-shadow:inset -1px -1px 0 #404040,inset 1px 1px 0 #ffffff,inset -2px -2px 0 #808080,inset 2px 2px 0 #d4d0c8"></div>
<div class="a t" style="left:979px;top:537px;transform:scaleX(0.9177);">Szczegóły</div>
<div class="a" style="left:979px;top:548px;width:6px;height:1px;background:#000"></div>
<div class="a" style="left:1047px;top:530px;width:74px;height:25px;background:#d4d0c8;box-shadow:inset -1px -1px 0 #404040,inset 1px 1px 0 #ffffff,inset -2px -2px 0 #808080,inset 2px 2px 0 #d4d0c8"></div>
<div class="a t" style="left:1087px;top:537px;transform:scaleX(0.8764);">OK</div>
<svg class="a" style="left:1065px;top:535px" width="17" height="15" viewBox="0 0 17 15"><path d="M0.5 8.500L3 6L6 9.500L13.500 0.500L16 2.500L6.500 14.500H5Z" fill="#06441a"/><path d="M0.500 7.800L2.800 5.500L5.800 8.800L13.200 0L15.500 1.800L6 13.500H5Z" fill="#128a2a"/><path d="M2.600 6.300L5.800 9.700L13.200 0.800" stroke="#40c450" stroke-width="0.900" fill="none"/></svg>
<svg class="a" style="left:871px;top:537px" width="16" height="14" viewBox="0 0 16 14"><path d="M0.500 7.500L3 5H13.500L15.500 4.500V10L12 13.500H1.500L0.500 12.500Z" fill="#e4e4e4" stroke="#000"/><path d="M0.500 7.500H12L15.500 4.500M12 7.500V13.500" stroke="#000" fill="none"/><path d="M1 10.500H12" stroke="#3a1010"/><path d="M4.700 0.500H13.600L11.600 5.500H2.800Z" fill="#fff" stroke="#000"/><path d="M6 2.500H11M5 4H10" stroke="#101090"/></svg>
<svg class="a" style="left:959px;top:536px" width="15" height="13" viewBox="0 0 15 13"><rect x="0.500" y="0.500" width="10" height="12" fill="#fff" stroke="#000"/><path d="M2 2.500H8M3 4.500H6M2 6.500H6M2 8.500H6M2 10.500H8" stroke="#000"/><path d="M7.500 4.500H12.500L10.500 6.500L14 10L13.300 10.700L9.800 7.200L7.500 9.500Z" fill="#10107a"/></svg>
<div class="a" style="left:2px;top:560px;width:1123px;height:1px;background:#8c8c8c"></div>
<div class="a" style="left:4px;top:563px;width:73px;height:17px;box-shadow:inset 1px 1px 0 #808080,inset -1px -1px 0 #ffffff"></div>
<div class="a" style="left:79px;top:563px;width:1046px;height:17px;box-shadow:inset 1px 1px 0 #808080,inset -1px -1px 0 #ffffff"></div>
<div class="a t" style="left:82px;top:566px;transform:scaleX(0.9162);">Moduł: Płyta</div>
<svg class="a" style="left:1112px;top:567px" width="13" height="13" viewBox="0 0 13 13"><path d="M12 1L1 12M12 5L5 12M12 9L9 12" stroke="#808080" stroke-width="1"/><path d="M12 2L2 12M12 6L6 12M12 10L10 12" stroke="#fff" stroke-width="1"/></svg>
<div class="a" style="left:145px;top:239px;width:612px;height:339px;background:#d4d0c8;box-shadow:inset -1px -1px 0 #404040,inset 1px 1px 0 #d4d0c8,inset -2px -2px 0 #808080,inset 2px 2px 0 #ffffff"></div>
<div class="a" style="left:148px;top:242px;width:606px;height:18px;background:linear-gradient(to right,#000006 0%,#00001c 15%,#01015c 33%,#020296 50%,#0303b8 65%,#0404d2 80%,#0404ea 100%)"></div>
<div class="a" style="left:150px;top:244px;width:15px;height:15px"><svg width="15" height="15" viewBox="0 0 15 15"><rect width="15" height="15" fill="#f2ee3c"/><circle cx="7.500" cy="7.500" r="6.500" fill="#050530"/><circle cx="7.500" cy="7.500" r="5" fill="#15156e"/><path d="M6 6.600L2.600 4.600M9 6.600L12.400 4.600M6 8.400L2.600 10.400M9 8.400L12.400 10.400" stroke="#f4f4f4" stroke-width="0.900"/><path d="M7.500 0.500V14.500" stroke="#eeeea0" stroke-width="0.900"/><path d="M5.500 7.500H9.500" stroke="#d8d8b0" stroke-width="0.800"/><path d="M0.600 3.800L2.200 4.700M14.400 3.800L12.800 4.700M0.600 11.200L2.200 10.300M14.400 11.200L12.800 10.300" stroke="#f2ee3c" stroke-width="1.200"/></svg></div>
<div class="a t" style="left:168px;top:243px;transform:scaleX(0.9909);color:#30e030;font-weight:bold;line-height:16px">Wejście 8 - Moduł: Płyta główna</div>
<div class="a" style="left:702px;top:244px;width:16px;height:14px;background:#d4d0c8;box-shadow:inset -1px -1px 0 #404040,inset 1px 1px 0 #ffffff,inset -2px -2px 0 #808080"></div>
<div class="a" style="left:706px;top:253px;width:6px;height:2px;background:#000"></div>
<div class="a" style="left:718px;top:244px;width:16px;height:14px;background:#d4d0c8;box-shadow:inset -1px -1px 0 #404040,inset 1px 1px 0 #ffffff,inset -2px -2px 0 #808080"></div>
<div class="a" style="left:721px;top:246px;width:9px;height:9px;border:1px solid #000;border-top:2px solid #000;box-sizing:border-box"></div>
<div class="a" style="left:736px;top:244px;width:16px;height:14px;background:#d4d0c8;box-shadow:inset -1px -1px 0 #404040,inset 1px 1px 0 #ffffff,inset -2px -2px 0 #808080"></div>
<svg class="a" style="left:740px;top:247px" width="8" height="7" viewBox="0 0 8 7"><path d="M0.5 0L6.5 7M1.5 0L7.5 7M6.5 0L0.5 7M7.5 0L1.5 7" stroke="#000" stroke-width="1" fill="none"/></svg>
<div class="a" style="left:150px;top:263px;width:602px;height:269px;box-shadow:inset 1px 1px 0 #808080,inset -1px -1px 0 #ffffff"></div>
<div class="a" style="left:155px;top:269px;width:593px;height:139px;box-shadow:inset 1px 1px 0 #808080,inset -1px -1px 0 #ffffff"></div>
<div class="a" style="left:156px;top:270px;width:592px;height:138px;box-shadow:inset 1px 1px 0 #ffffff"></div>
<div class="a" style="left:746px;top:270px;width:1px;height:137px;background:#808080"></div>
<div class="a" style="left:156px;top:406px;width:591px;height:1px;background:#808080"></div>
<div class="a t" style="left:166px;top:279px;transform:scaleX(0.8911);">Nazwa wejścia:</div>
<div class="a t" style="left:166px;top:307px;transform:scaleX(0.8671);">Należy do strefy:</div>
<div class="a t" style="left:166px;top:333px;transform:scaleX(0.9013);">Typ reakcji:</div>
<div class="a t" style="left:166px;top:359px;transform:scaleX(0.8974);">Sposób załączania:</div>
<div class="a t" style="left:169px;top:386px;transform:scaleX(0.8556);">Komentarz:</div>
<div class="a t" style="left:479px;top:280px;transform:scaleX(0.8741);">Typ linii:</div>
<div class="a t" style="left:478px;top:306px;transform:scaleX(0.9106);">Czułość:</div>
<div class="a t" style="left:478px;top:333px;transform:scaleX(0.8812);">Maks. czas naruszenia:</div>
<div class="a t" style="left:478px;top:359px;transform:scaleX(0.8913);">Maks. czas braku nar.:</div>
<div class="a" style="left:293px;top:275px;width:140px;height:22px;background:#ffffff;box-shadow:inset -1px -1px 0 #ffffff,inset 1px 1px 0 #808080,inset -2px -2px 0 #d4d0c8,inset 2px 2px 0 #404040"></div>
<div class="a t" style="left:296px;top:280px;transform:scaleX(0.9154);">Zewnętrzna</div>
<div class="a" style="left:293px;top:300px;width:140px;height:22px;background:#ffffff;box-shadow:inset -1px -1px 0 #ffffff,inset 1px 1px 0 #808080,inset -2px -2px 0 #d4d0c8,inset 2px 2px 0 #404040"></div>
<div class="a" style="left:415px;top:302px;width:16px;height:18px;background:#d4d0c8;box-shadow:inset -1px -1px 0 #404040,inset 1px 1px 0 #ffffff,inset -2px -2px 0 #808080,inset 2px 2px 0 #d4d0c8"></div>
<svg class="a" style="left:419px;top:309px" width="7" height="4" viewBox="0 0 7 4"><path d="M0 0H7L3.5 4Z" fill="#000"/></svg>
<div class="a t" style="left:298px;top:305px;transform:scaleX(0.8859);">3: Mieszkanie</div>
<div class="a" style="left:272px;top:327px;width:161px;height:22px;background:#ffffff;box-shadow:inset -1px -1px 0 #ffffff,inset 1px 1px 0 #808080,inset -2px -2px 0 #d4d0c8,inset 2px 2px 0 #404040"></div>
<div class="a" style="left:415px;top:329px;width:16px;height:18px;background:#d4d0c8;box-shadow:inset -1px -1px 0 #404040,inset 1px 1px 0 #ffffff,inset -2px -2px 0 #808080,inset 2px 2px 0 #d4d0c8"></div>
<svg class="a" style="left:419px;top:336px" width="7" height="4" viewBox="0 0 7 4"><path d="M0 0H7L3.5 4Z" fill="#000"/></svg>
<div class="a t" style="left:277px;top:332px;transform:scaleX(0.9483);">82: Zał/wył czuwanie</div>
<div class="a" style="left:376px;top:353px;width:57px;height:22px;background:#ffffff;box-shadow:inset -1px -1px 0 #ffffff,inset 1px 1px 0 #808080,inset -2px -2px 0 #d4d0c8,inset 2px 2px 0 #404040"></div>
<div class="a" style="left:415px;top:355px;width:16px;height:18px;background:#d4d0c8;box-shadow:inset -1px -1px 0 #404040,inset 1px 1px 0 #ffffff,inset -2px -2px 0 #808080,inset 2px 2px 0 #d4d0c8"></div>
<svg class="a" style="left:419px;top:362px" width="7" height="4" viewBox="0 0 7 4"><path d="M0 0H7L3.5 4Z" fill="#000"/></svg>
<div class="a" style="left:378px;top:356px;width:37px;height:16px;background:#0a246a;outline:1px dotted #e8e8b0;outline-offset:-1px"></div>
<div class="a t" style="left:381px;top:358px;transform:scaleX(0.9026);color:#fff">Typ 0</div>
<div class="a" style="left:224px;top:380px;width:517px;height:21px;background:#ffffff;box-shadow:inset -1px -1px 0 #ffffff,inset 1px 1px 0 #808080,inset -2px -2px 0 #d4d0c8,inset 2px 2px 0 #404040"></div>
<div class="a" style="left:567px;top:275px;width:118px;height:22px;background:#ffffff;box-shadow:inset -1px -1px 0 #ffffff,inset 1px 1px 0 #808080,inset -2px -2px 0 #d4d0c8,inset 2px 2px 0 #404040"></div>
<div class="a" style="left:667px;top:277px;width:16px;height:18px;background:#d4d0c8;box-shadow:inset -1px -1px 0 #404040,inset 1px 1px 0 #ffffff,inset -2px -2px 0 #808080,inset 2px 2px 0 #d4d0c8"></div>
<svg class="a" style="left:671px;top:284px" width="7" height="4" viewBox="0 0 7 4"><path d="M0 0H7L3.5 4Z" fill="#000"/></svg>
<div class="a t" style="left:572px;top:280px;transform:scaleX(0.8961);">1: NC</div>
<div class="a" style="left:599px;top:300px;width:50px;height:22px;background:#ffffff;box-shadow:inset -1px -1px 0 #ffffff,inset 1px 1px 0 #808080,inset -2px -2px 0 #d4d0c8,inset 2px 2px 0 #404040"></div>
<div class="a t" style="left:602px;top:303px;transform:scaleX(0.93);">320</div>
<div class="a" style="left:633px;top:302px;width:15px;height:9px;background:#d4d0c8;box-shadow:inset -1px -1px 0 #404040,inset 1px 1px 0 #ffffff,inset -2px -2px 0 #808080"></div>
<svg class="a" style="left:636px;top:305px" width="7" height="4" viewBox="0 0 7 4"><path d="M3.5 0L7 4H0Z" fill="#000"/></svg>
<div class="a" style="left:633px;top:311px;width:15px;height:8px;background:#d4d0c8;box-shadow:inset -1px -1px 0 #404040,inset 1px 1px 0 #ffffff,inset -2px -2px 0 #808080"></div>
<svg class="a" style="left:636px;top:313px" width="7" height="4" viewBox="0 0 7 4"><path d="M0 0H7L3.5 4Z" fill="#000"/></svg>
<div class="a t" style="left:653px;top:305px;transform:scaleX(0.8438);">ms</div>
<div class="a" style="left:599px;top:326px;width:50px;height:22px;background:#ffffff;box-shadow:inset -1px -1px 0 #ffffff,inset 1px 1px 0 #808080,inset -2px -2px 0 #d4d0c8,inset 2px 2px 0 #404040"></div>
<div class="a t" style="left:602px;top:329px;transform:scaleX(0.93);">0</div>
<div class="a" style="left:633px;top:328px;width:15px;height:9px;background:#d4d0c8;box-shadow:inset -1px -1px 0 #404040,inset 1px 1px 0 #ffffff,inset -2px -2px 0 #808080"></div>
<svg class="a" style="left:636px;top:331px" width="7" height="4" viewBox="0 0 7 4"><path d="M3.5 0L7 4H0Z" fill="#000"/></svg>
<div class="a" style="left:633px;top:337px;width:15px;height:8px;background:#d4d0c8;box-shadow:inset -1px -1px 0 #404040,inset 1px 1px 0 #ffffff,inset -2px -2px 0 #808080"></div>
<svg class="a" style="left:636px;top:339px" width="7" height="4" viewBox="0 0 7 4"><path d="M0 0H7L3.5 4Z" fill="#000"/></svg>
<div class="a t" style="left:656px;top:331px;transform:scaleX(0.8539);">sek.</div>
<div class="a" style="left:599px;top:352px;width:50px;height:22px;background:#ffffff;box-shadow:inset -1px -1px 0 #ffffff,inset 1px 1px 0 #808080,inset -2px -2px 0 #d4d0c8,inset 2px 2px 0 #404040"></div>
<div class="a t" style="left:602px;top:355px;transform:scaleX(0.93);">0</div>
<div class="a" style="left:633px;top:354px;width:15px;height:9px;background:#d4d0c8;box-shadow:inset -1px -1px 0 #404040,inset 1px 1px 0 #ffffff,inset -2px -2px 0 #808080"></div>
<svg class="a" style="left:636px;top:357px" width="7" height="4" viewBox="0 0 7 4"><path d="M3.5 0L7 4H0Z" fill="#000"/></svg>
<div class="a" style="left:633px;top:363px;width:15px;height:8px;background:#d4d0c8;box-shadow:inset -1px -1px 0 #404040,inset 1px 1px 0 #ffffff,inset -2px -2px 0 #808080"></div>
<svg class="a" style="left:636px;top:365px" width="7" height="4" viewBox="0 0 7 4"><path d="M0 0H7L3.5 4Z" fill="#000"/></svg>
<svg class="a" style="left:656px;top:349px" width="12" height="12" viewBox="0 0 12 12"><circle cx="6" cy="6" r="5.500" fill="#fff" stroke="#808080"/><path d="M2.100 9.900A5.500 5.500 0 0 0 9.900 2.100" stroke="#fff" fill="none"/><path d="M2.100 9.900A5.500 5.500 0 0 1 9.900 2.100" stroke="#404040" fill="none" transform="translate(0.700 0.700) scale(0.880)"/><circle cx="6" cy="6" r="2" fill="#000"/></svg>
<div class="a t" style="left:673px;top:349px;transform:scaleX(0.8685);">godz.</div>
<svg class="a" style="left:656px;top:364px" width="12" height="12" viewBox="0 0 12 12"><circle cx="6" cy="6" r="5.500" fill="#fff" stroke="#808080"/><path d="M2.100 9.900A5.500 5.500 0 0 0 9.900 2.100" stroke="#fff" fill="none"/><path d="M2.100 9.900A5.500 5.500 0 0 1 9.900 2.100" stroke="#404040" fill="none" transform="translate(0.700 0.700) scale(0.880)"/></svg>
<div class="a t" style="left:673px;top:364px;transform:scaleX(0.8072);">min.</div>
<div class="a" style="left:154px;top:413px;width:594px;height:114px;box-shadow:inset 1px 1px 0 #808080,inset -1px -1px 0 #ffffff"></div>
<div class="a" style="left:155px;top:414px;width:593px;height:113px;box-shadow:inset 1px 1px 0 #ffffff"></div>
<div class="a" style="left:746px;top:414px;width:1px;height:112px;background:#808080"></div>
<div class="a" style="left:155px;top:525px;width:592px;height:1px;background:#808080"></div>
<div class="a" style="left:160px;top:408px;width:33px;height:13px;background:#d4d0c8"></div>
<div class="a t" style="left:163px;top:409px;transform:scaleX(0.8929);">Opcje</div>
<div class="a" style="left:159px;top:425px;width:13px;height:13px;background:#ffffff;box-shadow:inset -1px -1px 0 #ffffff,inset 1px 1px 0 #808080,inset -2px -2px 0 #d4d0c8,inset 2px 2px 0 #404040"></div>
<div class="a t" style="left:177px;top:425px;transform:scaleX(0.8936);">Bez al. po zał. zas.</div>
<div class="a" style="left:159px;top:441px;width:13px;height:13px;background:#ffffff;box-shadow:inset -1px -1px 0 #ffffff,inset 1px 1px 0 #808080,inset -2px -2px 0 #d4d0c8,inset 2px 2px 0 #404040"></div>
<svg class="a" style="left:162px;top:444px" width="7" height="8" viewBox="0 0 7 8"><path d="M0 2L2.500 4.500L7 0V3L2.500 7.500L0 5Z" fill="#000"/></svg>
<div class="a t" style="left:177px;top:441px;transform:scaleX(0.8776);">Ster. naruszeniem (wył.-stanem)</div>
<div class="a" style="left:159px;top:457px;width:13px;height:13px;background:#ffffff;box-shadow:inset -1px -1px 0 #ffffff,inset 1px 1px 0 #808080,inset -2px -2px 0 #d4d0c8,inset 2px 2px 0 #404040"></div>
<div class="a t" style="left:177px;top:457px;transform:scaleX(0.8911);">Ster. wideo gdy nie cz.</div>
<div class="a" style="left:159px;top:473px;width:13px;height:13px;background:#ffffff;box-shadow:inset -1px -1px 0 #ffffff,inset 1px 1px 0 #808080,inset -2px -2px 0 #d4d0c8,inset 2px 2px 0 #404040"></div>
<div class="a t" style="left:177px;top:473px;transform:scaleX(0.9045);">Ster. wideo gdy czuwa</div>
<div class="a" style="left:159px;top:489px;width:13px;height:13px;background:#ffffff;box-shadow:inset -1px -1px 0 #ffffff,inset 1px 1px 0 #808080,inset -2px -2px 0 #d4d0c8,inset 2px 2px 0 #404040"></div>
<div class="a t" style="left:177px;top:489px;transform:scaleX(0.9045);">Użytkownik nie blokuje</div>
<div class="a" style="left:159px;top:505px;width:13px;height:13px;background:#ffffff;box-shadow:inset -1px -1px 0 #ffffff,inset 1px 1px 0 #808080,inset -2px -2px 0 #d4d0c8,inset 2px 2px 0 #404040"></div>
<div class="a t" style="left:177px;top:505px;transform:scaleX(0.8814);">Blok. przy braku wyj.</div>
<div class="a" style="left:357px;top:425px;width:13px;height:13px;background:#ffffff;box-shadow:inset -1px -1px 0 #ffffff,inset 1px 1px 0 #808080,inset -2px -2px 0 #d4d0c8,inset 2px 2px 0 #404040"></div>
<div class="a t" style="left:375px;top:425px;transform:scaleX(0.8855);">Tylko 3 alarmy</div>
<div class="a" style="left:357px;top:441px;width:13px;height:13px;background:#ffffff;box-shadow:inset -1px -1px 0 #ffffff,inset 1px 1px 0 #808080,inset -2px -2px 0 #d4d0c8,inset 2px 2px 0 #404040"></div>
<div class="a t" style="left:375px;top:441px;transform:scaleX(0.8899);">Tylko 1 alarm</div>
<div class="a" style="left:357px;top:457px;width:13px;height:13px;background:#ffffff;box-shadow:inset -1px -1px 0 #ffffff,inset 1px 1px 0 #808080,inset -2px -2px 0 #d4d0c8,inset 2px 2px 0 #404040"></div>
<div class="a t" style="left:375px;top:457px;transform:scaleX(0.8995);">Autokas. liczenia</div>
<div class="a" style="left:357px;top:473px;width:13px;height:13px;background:#ffffff;box-shadow:inset -1px -1px 0 #ffffff,inset 1px 1px 0 #808080,inset -2px -2px 0 #d4d0c8,inset 2px 2px 0 #404040"></div>
<div class="a t" style="left:375px;top:473px;transform:scaleX(0.8626);">Prealarm</div>
<div class="a" style="left:357px;top:489px;width:13px;height:13px;background:#ffffff;box-shadow:inset -1px -1px 0 #ffffff,inset 1px 1px 0 #808080,inset -2px -2px 0 #d4d0c8,inset 2px 2px 0 #404040"></div>
<div class="a t" style="left:375px;top:489px;transform:scaleX(0.8813);">Kasowanie alarmu</div>
<div class="a" style="left:357px;top:505px;width:13px;height:13px;background:#ffffff;box-shadow:inset -1px -1px 0 #ffffff,inset 1px 1px 0 #808080,inset -2px -2px 0 #d4d0c8,inset 2px 2px 0 #404040"></div>
<svg class="a" style="left:360px;top:508px" width="7" height="8" viewBox="0 0 7 8"><path d="M0 2L2.500 4.500L7 0V3L2.500 7.500L0 5Z" fill="#000"/></svg>
<div class="a t" style="left:375px;top:505px;transform:scaleX(0.8917);">Sprawdzaj możliwość zał. czuwania</div>
<div class="a" style="left:555px;top:420px;width:13px;height:13px;background:#d4d0c8;box-shadow:inset -1px -1px 0 #ffffff,inset 1px 1px 0 #808080,inset -2px -2px 0 #d4d0c8,inset 2px 2px 0 #404040"></div>
<svg class="a" style="left:558px;top:423px" width="7" height="8" viewBox="0 0 7 8"><path d="M0 2L2.500 4.500L7 0V3L2.500 7.500L0 5Z" fill="#808080"/></svg>
<div class="a t" style="left:574px;top:421px;transform:scaleX(0.9046);color:#fff">Bez mon./pow. gdy cz.na we.</div>
<div class="a t" style="left:573px;top:420px;transform:scaleX(0.9046);color:#808080">Bez mon./pow. gdy cz.na we.</div>
<div class="a" style="left:555px;top:435px;width:13px;height:13px;background:#ffffff;box-shadow:inset -1px -1px 0 #ffffff,inset 1px 1px 0 #808080,inset -2px -2px 0 #d4d0c8,inset 2px 2px 0 #404040"></div>
<div class="a t" style="left:573px;top:435px;transform:scaleX(0.8844);">Kod powr. po alarm.</div>
<div class="a" style="left:555px;top:450px;width:13px;height:13px;background:#ffffff;box-shadow:inset -1px -1px 0 #ffffff,inset 1px 1px 0 #808080,inset -2px -2px 0 #d4d0c8,inset 2px 2px 0 #404040"></div>
<div class="a t" style="left:573px;top:450px;transform:scaleX(0.9100);">Kod powr. po wył.</div>
<div class="a" style="left:555px;top:465px;width:13px;height:13px;background:#ffffff;box-shadow:inset -1px -1px 0 #ffffff,inset 1px 1px 0 #808080,inset -2px -2px 0 #d4d0c8,inset 2px 2px 0 #404040"></div>
<svg class="a" style="left:558px;top:468px" width="7" height="8" viewBox="0 0 7 8"><path d="M0 2L2.500 4.500L7 0V3L2.500 7.500L0 5Z" fill="#000"/></svg>
<div class="a t" style="left:573px;top:465px;transform:scaleX(0.8860);">Kasowanie powiadamiania</div>
<div class="a" style="left:555px;top:480px;width:13px;height:13px;background:#ffffff;box-shadow:inset -1px -1px 0 #ffffff,inset 1px 1px 0 #808080,inset -2px -2px 0 #d4d0c8,inset 2px 2px 0 #404040"></div>
<svg class="a" style="left:558px;top:483px" width="7" height="8" viewBox="0 0 7 8"><path d="M0 2L2.500 4.500L7 0V3L2.500 7.500L0 5Z" fill="#000"/></svg>
<div class="a t" style="left:573px;top:480px;transform:scaleX(0.8898);">Alarm po odblokowaniu</div>
<div class="a" style="left:555px;top:495px;width:13px;height:13px;background:#ffffff;box-shadow:inset -1px -1px 0 #ffffff,inset 1px 1px 0 #808080,inset -2px -2px 0 #d4d0c8,inset 2px 2px 0 #404040"></div>
<div class="a t" style="left:573px;top:495px;transform:scaleX(0.8840);">Alarm sabotażowy zawsze głośny</div>
<div class="a" style="left:555px;top:510px;width:13px;height:13px;background:#ffffff;box-shadow:inset -1px -1px 0 #ffffff,inset 1px 1px 0 #808080,inset -2px -2px 0 #d4d0c8,inset 2px 2px 0 #404040"></div>
<div class="a t" style="left:573px;top:510px;transform:scaleX(0.8913);">GONG w ekspanderze</div>
<div class="a" style="left:219px;top:541px;width:130px;height:25px;background:#d4d0c8;box-shadow:inset -1px -1px 0 #404040,inset 1px 1px 0 #ffffff,inset -2px -2px 0 #808080,inset 2px 2px 0 #d4d0c8"></div>
<div class="a t" style="left:250px;top:548px;transform:scaleX(0.8869);">Poprzednie wejście</div>
<div class="a" style="left:229px;top:550px;width:16px;height:4px;background:linear-gradient(#1cb428,#0e9018 50%,#086a10);border-radius:1.500px;box-shadow:-1px 0 1px #a8e0a0"></div>
<div class="a" style="left:401px;top:541px;width:80px;height:25px;background:#d4d0c8;box-shadow:inset -1px -1px 0 #404040,inset 1px 1px 0 #ffffff,inset -2px -2px 0 #808080,inset 2px 2px 0 #d4d0c8"></div>
<div class="a t" style="left:445px;top:549px;transform:scaleX(0.8764);">OK</div>
<div class="a" style="left:445px;top:560px;width:7px;height:1px;background:#000"></div>
<svg class="a" style="left:424px;top:546px" width="17" height="15" viewBox="0 0 17 15"><path d="M0.5 8.500L3 6L6 9.500L13.500 0.500L16 2.500L6.500 14.500H5Z" fill="#06441a"/><path d="M0.500 7.800L2.800 5.500L5.800 8.800L13.200 0L15.500 1.800L6 13.500H5Z" fill="#128a2a"/><path d="M2.600 6.300L5.800 9.700L13.200 0.800" stroke="#40c450" stroke-width="0.900" fill="none"/></svg>
<div class="a" style="left:527px;top:541px;width:130px;height:25px;background:#d4d0c8;box-shadow:inset -1px -1px 0 #404040,inset 1px 1px 0 #ffffff,inset -2px -2px 0 #808080,inset 2px 2px 0 #d4d0c8"></div>
<div class="a t" style="left:540px;top:549px;transform:scaleX(0.8951);">Następne wejście</div>
<svg class="a" style="left:629px;top:547px" width="14" height="14" viewBox="0 0 14 14"><path d="M5 0H9V5H14V9H9V14H5V9H0V5H5Z" fill="#0c7a14"/><path d="M6 1H8V6H13V8H8V13H6V8H1V6H6Z" fill="#28b430"/></svg>
</div></body></html>
